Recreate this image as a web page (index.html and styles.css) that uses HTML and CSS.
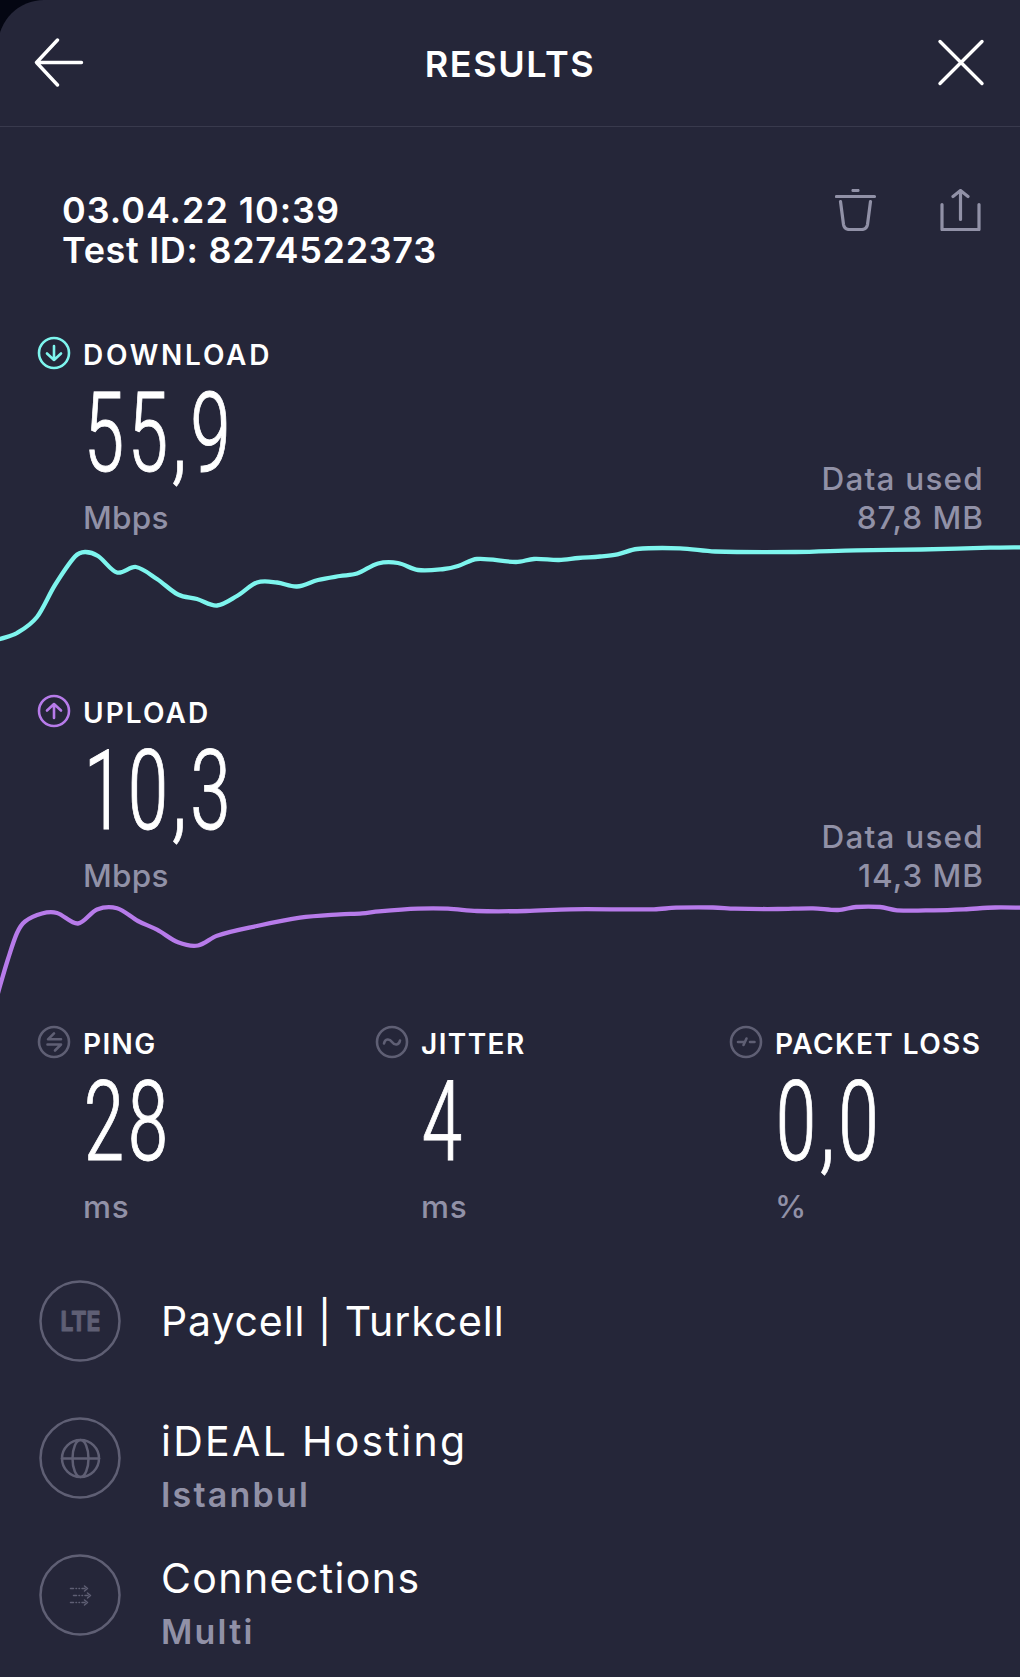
FILE: index.html
```html
<!DOCTYPE html>
<html lang="en">
<head>
<meta charset="utf-8">
<title>Results</title>
<link rel="stylesheet" href="styles.css">
</head>
<body>
<main class="sheet">
  <header class="topbar">
    <svg class="nav-icon" viewBox="0 0 50 50"><path d="M23.5 2 2.5 24.5l21 22.5M2.5 24.5h45"/></svg>
    <h1 class="title">RESULTS</h1>
    <svg class="nav-icon" viewBox="0 0 50 50"><path d="m4 3.500 42 42M46 3.500l-42 42"/></svg>
  </header>

  <section class="meta">
    <div class="meta-text">
      <div class="date">03.04.22 10:39</div>
      <div class="test-id">Test ID: 8274522373</div>
    </div>
    <div class="actions">
      <svg class="action-icon" viewBox="0 0 42 42"><path d="M18 1.500h5M1.500 7.500h38M5.500 12.500l3 23q.8 5 6 5h12q5.200 0 6-5l3-23"/></svg>
      <svg class="action-icon" viewBox="0 0 42 42"><path d="M2 15.500v25h37v-25M20.500 30.500V2M13 7.500l7.500-6 7.500 6"/></svg>
    </div>
  </section>

  <section class="speed download">
    <div class="label-row">
      <svg class="badge" viewBox="0 0 36 36"><circle cx="18" cy="18" r="15"/><path d="M18 11v14M11 18.500l7 6.500 7-6.500"/></svg>
      <h2 class="label wide">DOWNLOAD</h2>
    </div>
    <div class="reading">
      <div class="measure">
        <div class="value">55,9</div>
        <div class="unit">Mbps</div>
      </div>
      <div class="usage">
        <div class="usage-label">Data used</div>
        <div class="usage-value">87,8 MB</div>
      </div>
    </div>
    <svg class="chart" viewBox="0 537 1020 120" data-points="-6,641 0,639 17,633 37,617 55,585 75,556.5 85,552 98,556 117,572.5 136,567 157,579 178,594.5 197,599 217,605.5 237,596 257,582.5 277,582.5 297,586.5 318,580 340,576 357,573.5 378,563.5 398,563 418,570 444,569 458,566 477,559 516,562 534,559 559,560 578.5,558 600,556.5 617.5,554.3 637,549 680,548.3 715,551.5 795,552 856,550.3 921,549.5 990,547.7 1026,547.3"><path/></svg>
  </section>

  <section class="speed upload">
    <div class="label-row">
      <svg class="badge" viewBox="0 0 36 36"><circle cx="18" cy="18" r="15"/><path d="M18 25V11M11 17.500l7-6.500 7 6.500"/></svg>
      <h2 class="label wide">UPLOAD</h2>
    </div>
    <div class="reading">
      <div class="measure">
        <div class="value">10,3</div>
        <div class="unit">Mbps</div>
      </div>
      <div class="usage">
        <div class="usage-label">Data used</div>
        <div class="usage-value">14,3 MB</div>
      </div>
    </div>
    <svg class="chart" viewBox="0 895 1020 120" data-points="-6,1008 0,986 8,959 17,933 25,921.5 42,913.5 57,913 78,923.5 97,909.5 117,908.3 138,921 157,929.7 178,942.3 198,945.5 217,935.7 257,926 300,917.7 340,914.3 362,913.3 379,911.3 418,908.7 448,908.7 477,911 526,911 570,909.3 654,909.3 676,907.7 713,907.5 735,908.7 778,909 813,908.3 838,910 856,907 880,907 897,910.3 934,910.3 964,909.3 995,907.5 1026,907.8"><path/></svg>
  </section>

  <section class="stats">
    <div class="stat">
      <div class="label-row">
        <svg class="badge" viewBox="0 0 36 36"><circle cx="18" cy="18" r="15"/><path d="M25 15.300H12l6-6M11.500 20.500h13.500l-6 6"/></svg>
        <h2 class="label">PING</h2>
      </div>
      <div class="value">28</div>
      <div class="unit">ms</div>
    </div>
    <div class="stat">
      <div class="label-row">
        <svg class="badge" viewBox="0 0 36 36"><circle cx="18" cy="18" r="15"/><path d="M10 19.500c1-5 5.500-5 8-1.500s7 3.500 8-1.500"/></svg>
        <h2 class="label">JITTER</h2>
      </div>
      <div class="value">4</div>
      <div class="unit">ms</div>
    </div>
    <div class="stat">
      <div class="label-row">
        <svg class="badge" viewBox="0 0 36 36"><circle cx="18" cy="18" r="15"/><path d="M10 18h6.500M15.500 21l3-6.500M22 18h4.500"/></svg>
        <h2 class="label">PACKET LOSS</h2>
      </div>
      <div class="value">0,0</div>
      <div class="unit">%</div>
    </div>
  </section>

  <section class="details">
    <div class="detail">
      <svg class="ring" viewBox="0 0 82 82"><circle cx="41" cy="41" r="39.500"/><text x="21.500" y="51" textLength="40" lengthAdjust="spacingAndGlyphs">LTE</text></svg>
      <div class="detail-text"><div class="name provider">Paycell | Turkcell</div></div>
    </div>
    <div class="detail">
      <svg class="ring" viewBox="0 0 82 82"><circle cx="41" cy="41" r="39.500"/><circle cx="41.500" cy="41.500" r="18.500"/><ellipse cx="41.500" cy="41.500" rx="8" ry="18.500"/><path d="M23 41.500h37"/></svg>
      <div class="detail-text"><div class="name host">iDEAL Hosting</div><div class="sub">Istanbul</div></div>
    </div>
    <div class="detail">
      <svg class="ring" viewBox="0 0 82 82"><circle cx="41" cy="41" r="39.500"/>
        <g class="streams"><path class="dash" d="M31.500 34.500h15M34.500 41.500h15M31.500 48.500h15"/><path d="m45.500 32 3 2.500-3 2.500M48.500 39l3 2.500-3 2.500M45.500 46l3 2.500-3 2.500"/></g></svg>
      <div class="detail-text"><div class="name">Connections</div><div class="sub">Multi</div></div>
    </div>
  </section>
</main>
<script src="chart.js"></script>
</body>
</html>
```
FILE: styles.css
```css
* { box-sizing: border-box; }

body {
  margin: 0;
  background: #040612;
  color: #fff;
  font-family: Inter, "Liberation Sans", sans-serif;
  overflow: hidden;
}

svg {
  display: block;
  flex: none;
  fill: none;
  stroke: currentColor;
  stroke-linecap: round;
  stroke-linejoin: round;
}

h1, h2 { margin: 0; font-weight: 600; }

.sheet {
  height: 1677px;
  margin-left: -2px;
  padding-left: 2px;
  border-top-left-radius: 46px;
  background: #252639;
  white-space: nowrap;
  overflow: hidden;
}

.topbar {
  display: flex;
  align-items: center;
  justify-content: space-between;
  height: 127px;
  margin-left: -2px;
  padding: 0 34px 0 36px;
  border-bottom: 1px solid #393a4d;
}
.nav-icon { width: 50px; height: 50px; stroke-width: 3.4; }
.title { margin-top: 2px; font-size: 36px; letter-spacing: 1.6px; }

.meta {
  display: flex;
  justify-content: space-between;
  height: 193px;
  padding: 62px 38px 0 62px;
}
.meta-text { font-size: 36px; font-weight: 600; line-height: 40px; padding-top: 1px; }
.date { letter-spacing: .95px; }
.test-id { letter-spacing: .68px; }
.actions { display: flex; gap: 63px; color: #9191a7; }
.action-icon { width: 42px; height: 42px; stroke-width: 3.2; }

.speed { height: 358px; padding-top: 15px; }
.upload { height: 337px; }
.label-row { display: flex; gap: 11px; height: 40px; }
.speed .label-row { padding-left: 36px; }
.badge { width: 36px; height: 36px; stroke-width: 2.6; }
.download .badge, .download .chart { color: #7ef5ee; }
.upload .badge, .upload .chart { color: #b77bea; }
.label { font-size: 28px; line-height: 40px; letter-spacing: 1.4px; }
.wide { letter-spacing: 2.75px; }
.upload .wide { letter-spacing: 2.1px; }

.reading {
  display: flex;
  justify-content: space-between;
  align-items: flex-end;
  height: 162px;
  padding: 0 36px 0 83px;
}
.value {
  height: 123px;
  font-family: "Roboto Condensed", Roboto, sans-serif;
  font-size: 112px;
  font-weight: 300;
  line-height: 115px;
  letter-spacing: 2.6px;
  -webkit-text-stroke: .9px #fff;
  transform: scaleX(.77);
  transform-origin: left;
}
.unit, .usage {
  color: #9191a7;
  font-size: 31.5px;
  font-weight: 500;
  line-height: 39px;
}
.unit { letter-spacing: .3px; }
.usage { text-align: right; }
.usage-label { letter-spacing: 1.2px; }
.usage-value { letter-spacing: 1px; }
.chart { width: 1020px; height: 120px; stroke-width: 4.3; }

.stats {
  display: grid;
  grid-template-columns: 338px 354px 1fr;
  height: 237px;
  padding: 9px 0 0 36px;
}
.stats .value, .stats .unit { margin-left: 47px; }
.stats .badge { color: #5f5f74; }
.stats .unit { letter-spacing: .8px; }

.details { padding-left: 39px; }
.detail { display: flex; align-items: center; gap: 40px; height: 137px; }
.ring { width: 82px; height: 82px; stroke-width: 2.5; color: #5f5f74; }
.ring text {
  fill: currentColor;
  stroke-width: 1;
  font: 700 27.5px Inter, sans-serif;
}
.streams { stroke-width: 1.5; }
.dash { stroke-dasharray: 3 2.500 .5 2.500 .5 2.500; }
.name { font-size: 41px; font-weight: 400; line-height: 53px; letter-spacing: 1.4px; }
.provider { padding-top: 2px; letter-spacing: .9px; }
.host { letter-spacing: 2.3px; }
.sub {
  color: #9191a7;
  font-size: 34px;
  font-weight: 600;
  line-height: 53px;
  letter-spacing: 2.2px;
}
.detail:not(:first-child) .detail-text { padding-top: 20px; }
```
FILE: chart.js
```js
// Draws each chart as a smooth curve through its samples.
document.querySelectorAll('.chart').forEach(function (svg) {
  var p = svg.dataset.points.split(' ').map(function (s) { return s.split(',').map(Number); });
  var slope = p.map(function (pt, i) {
    var a = p[Math.max(i - 1, 0)], b = p[Math.min(i + 1, p.length - 1)];
    return (b[1] - a[1]) / (b[0] - a[0]);
  });
  var d = 'M' + p[0].join(' ');
  for (var i = 1; i < p.length; i++) {
    var h = (p[i][0] - p[i - 1][0]) / 3;
    d += 'C' + [p[i - 1][0] + h, p[i - 1][1] + slope[i - 1] * h,
      p[i][0] - h, p[i][1] - slope[i] * h, p[i][0], p[i][1]].join(' ');
  }
  svg.firstElementChild.setAttribute('d', d);
});
```
